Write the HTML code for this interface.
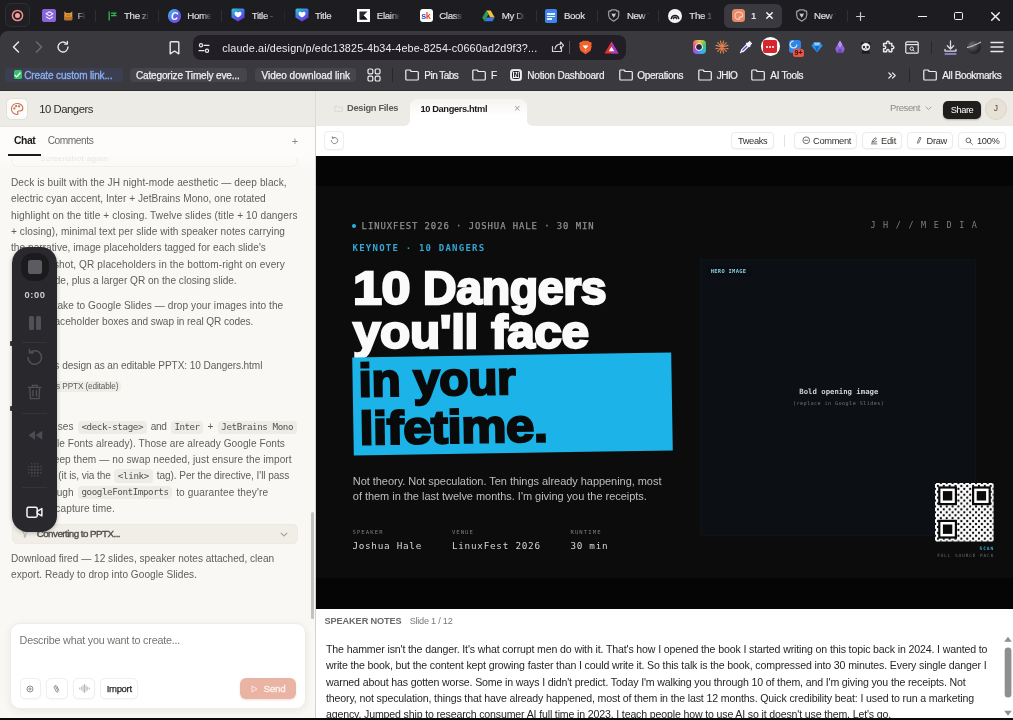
<!DOCTYPE html>
<html lang="en"><head><meta charset="utf-8"><title>10 Dangers</title>
<style>
html,body{margin:0;padding:0;}
body{width:1013px;height:720px;position:relative;overflow:hidden;background:#f7f6f2;font-family:"Liberation Sans",sans-serif;}
div{box-sizing:border-box;}
svg{position:absolute;overflow:visible;}
</style></head><body>
<div style="position:absolute;left:0;top:0;width:1013px;height:720px;overflow:hidden;will-change:transform;">
<div style="position:absolute;left:0.00px;top:0.00px;width:1013.00px;height:42.00px;background:#1d1c21;"></div><div style="position:absolute;left:0.00px;top:31.30px;width:1013.00px;height:59.50px;background:#3a393e;border-radius:8px 0 0 0;"></div><div style="position:absolute;left:0.00px;top:90.20px;width:1013.00px;height:0.70px;background:#2f2e33;"></div><div style="position:absolute;left:4.50px;top:3.20px;width:25.70px;height:23.80px;background:#201f24;border:1px solid #2f2e34;border-radius:6px;"></div><svg width="13" height="13" viewBox="0 0 13 13" style="left:10.800px;top:9.200px"><circle cx="6.500" cy="6.500" r="5.100" fill="none" stroke="#ef8d8d" stroke-width="1.500"/><circle cx="6.500" cy="6.500" r="2.500" fill="#f3a0a0"/></svg><div style="position:absolute;left:42.10px;top:9.00px;width:13.70px;height:12.80px;background:#8a64da;border-radius:2px;"></div><svg width="9" height="9" viewBox="0 0 12 12" style="left:44.500px;top:11px" fill="none" stroke="#f1eaff" stroke-width="1.500" stroke-linejoin="round"><path d="M6 1L1.500 3.800 6 6.500l4.500-2.700zM1.500 7.800L6 10.500l4.500-2.700"/></svg><svg width="8.600" height="9.600" viewBox="0 0 8.600 9.600" style="left:63.600px;top:11px"><path d="M0.300 0.300L2.300 1.900H6.300L8.300 0.300V8.300a1 1 0 0 1-1 1H1.300a1 1 0 0 1-1-1z" fill="#e0993a"/><path d="M0.300 5.800h8v2.500a1 1 0 0 1-1 1H1.300a1 1 0 0 1-1-1z" fill="#b8722a"/><path d="M2.300 4h4" stroke="#a4611d" stroke-width="1"/></svg><div style="position:absolute;left:77.40px;top:6px;width:7.80px;height:20px;overflow:hidden;"><div style='position:absolute;left:0.00px;top:3.44px;line-height:13px;white-space:pre;font-family:"Liberation Sans", sans-serif;font-size:9.7px;font-weight:400;color:#dfdee2;letter-spacing:-0.330px;-webkit-text-stroke:0.2px #dfdee2;'>Figma</div></div><div style="position:absolute;left:76.20px;top:8.00px;width:9.50px;height:15.00px;background:linear-gradient(90deg,rgba(29,28,33,0),#1d1c21);"></div><div style="position:absolute;left:95.30px;top:10.30px;width:1.00px;height:11.50px;background:#302f35;"></div><svg width="10" height="10" viewBox="0 0 10 10" style="left:107.500px;top:10.800px" fill="none" stroke="#2fb84a" stroke-width="1.300"><path d="M1.200 0.500v9"/><path d="M3 2.200h5.500M3 4.700h5.500M8 2.200c-2 0-3 2.500 0 2.500" stroke-width="1.200"/></svg><div style="position:absolute;left:124.00px;top:6px;width:24.50px;height:20px;overflow:hidden;"><div style='position:absolute;left:0.00px;top:3.44px;line-height:13px;white-space:pre;font-family:"Liberation Sans", sans-serif;font-size:9.7px;font-weight:400;color:#dfdee2;letter-spacing:-0.330px;-webkit-text-stroke:0.2px #dfdee2;'>The zip</div></div><div style="position:absolute;left:139.50px;top:8.00px;width:9.50px;height:15.00px;background:linear-gradient(90deg,rgba(29,28,33,0),#1d1c21);"></div><div style="position:absolute;left:158.00px;top:10.30px;width:1.00px;height:11.50px;background:#302f35;"></div><div style="position:absolute;left:167.80px;top:9.30px;width:13.40px;height:13.40px;background:linear-gradient(135deg,#3ec6e8,#5b5be8 60%,#8a4fe0);border-radius:50%;"></div><div style='position:absolute;left:170.98px;top:9.64px;line-height:13px;white-space:pre;font-family:"Liberation Sans", sans-serif;font-size:10px;font-weight:700;color:#ffffff;letter-spacing:0.000px;font-style:italic;'>C</div><div style="position:absolute;left:187.30px;top:6px;width:23.70px;height:20px;overflow:hidden;"><div style='position:absolute;left:0.00px;top:3.44px;line-height:13px;white-space:pre;font-family:"Liberation Sans", sans-serif;font-size:9.7px;font-weight:400;color:#dfdee2;letter-spacing:-0.330px;-webkit-text-stroke:0.2px #dfdee2;'>Home</div></div><div style="position:absolute;left:202.00px;top:8.00px;width:9.50px;height:15.00px;background:linear-gradient(90deg,rgba(29,28,33,0),#1d1c21);"></div><div style="position:absolute;left:221.00px;top:10.30px;width:1.00px;height:11.50px;background:#302f35;"></div><svg width="0" height="0" style="left:0;top:0"><defs><linearGradient id="hg" x1="0" y1="0" x2="0.6" y2="1"><stop offset="0" stop-color="#2ecfc0"/><stop offset="0.45" stop-color="#3a7fe8"/><stop offset="1" stop-color="#6d35e0"/></linearGradient></defs></svg><svg width="14" height="14" viewBox="0 0 14 14" style="left:231.0px;top:8.300px"><path d="M2 0.500h10a1.500 1.500 0 0 1 1.500 1.500v7.500L7 13.600 0.500 9.500V2A1.500 1.500 0 0 1 2 0.500z" fill="url(#hg)"/><path d="M7 9.600C4.600 7.900 3.500 6.800 3.500 5.500c0-1.800 2.400-2.300 3.500-.8 1.100-1.500 3.500-1 3.500.8 0 1.300-1.100 2.400-3.500 4.100z" fill="#fff"/></svg><div style="position:absolute;left:251.70px;top:6px;width:22.30px;height:20px;overflow:hidden;"><div style='position:absolute;left:0.00px;top:3.44px;line-height:13px;white-space:pre;font-family:"Liberation Sans", sans-serif;font-size:9.7px;font-weight:400;color:#dfdee2;letter-spacing:-0.330px;-webkit-text-stroke:0.2px #dfdee2;'>Title -</div></div><div style="position:absolute;left:265.00px;top:8.00px;width:9.50px;height:15.00px;background:linear-gradient(90deg,rgba(29,28,33,0),#1d1c21);"></div><div style="position:absolute;left:284.00px;top:10.30px;width:1.00px;height:11.50px;background:#27262b;"></div><svg width="14" height="14" viewBox="0 0 14 14" style="left:294.5px;top:8.300px"><path d="M2 0.500h10a1.500 1.500 0 0 1 1.500 1.500v7.500L7 13.600 0.500 9.500V2A1.500 1.500 0 0 1 2 0.500z" fill="url(#hg)"/><path d="M7 9.600C4.600 7.900 3.500 6.800 3.500 5.500c0-1.800 2.400-2.300 3.500-.8 1.100-1.500 3.500-1 3.500.8 0 1.300-1.100 2.400-3.500 4.100z" fill="#fff"/></svg><div style="position:absolute;left:315.00px;top:6px;width:19.00px;height:20px;overflow:hidden;"><div style='position:absolute;left:0.00px;top:3.44px;line-height:13px;white-space:pre;font-family:"Liberation Sans", sans-serif;font-size:9.7px;font-weight:400;color:#dfdee2;letter-spacing:-0.330px;-webkit-text-stroke:0.2px #dfdee2;'>Title</div></div><div style="position:absolute;left:356.80px;top:9.10px;width:13.30px;height:12.60px;background:#ffffff;"></div><svg width="9" height="9" viewBox="0 0 9 9" style="left:359px;top:11px"><path d="M0.500 0.500h8L4.500 4.500l4 4h-8z" fill="#2a2a2e"/><path d="M4.500 4.500L8.500 8.500H0.500z" fill="#111114"/></svg><div style="position:absolute;left:376.80px;top:6px;width:22.20px;height:20px;overflow:hidden;"><div style='position:absolute;left:0.00px;top:3.44px;line-height:13px;white-space:pre;font-family:"Liberation Sans", sans-serif;font-size:9.7px;font-weight:400;color:#dfdee2;letter-spacing:-0.330px;-webkit-text-stroke:0.2px #dfdee2;'>Elaine</div></div><div style="position:absolute;left:390.00px;top:8.00px;width:9.50px;height:15.00px;background:linear-gradient(90deg,rgba(29,28,33,0),#1d1c21);"></div><div style="position:absolute;left:419.90px;top:9.10px;width:13.40px;height:13.20px;background:#ffffff;border-radius:3px;"></div><div style='position:absolute;left:421.20px;top:10.08px;line-height:12px;white-space:pre;font-family:"Liberation Sans", sans-serif;font-size:9px;font-weight:700;color:#3d4fc4;letter-spacing:0.000px;'>s</div><div style='position:absolute;left:425.80px;top:10.08px;line-height:12px;white-space:pre;font-family:"Liberation Sans", sans-serif;font-size:9px;font-weight:700;color:#e2472e;letter-spacing:0.000px;'>k</div><div style="position:absolute;left:439.20px;top:6px;width:22.80px;height:20px;overflow:hidden;"><div style='position:absolute;left:0.00px;top:3.44px;line-height:13px;white-space:pre;font-family:"Liberation Sans", sans-serif;font-size:9.7px;font-weight:400;color:#dfdee2;letter-spacing:-0.330px;-webkit-text-stroke:0.2px #dfdee2;'>Classroom</div></div><div style="position:absolute;left:453.00px;top:8.00px;width:9.50px;height:15.00px;background:linear-gradient(90deg,rgba(29,28,33,0),#1d1c21);"></div><svg width="13" height="12" viewBox="0 0 13 12" style="left:482px;top:10px"><path d="M4.300 0.500h4.400l4 7h-4.400z" fill="#f6c338"/><path d="M4.300 0.500L0.300 7.500l2.200 3.800 4-7z" fill="#2a9d55"/><path d="M4.700 7.500h8l-2.200 3.800h-8z" fill="#3d79e6"/></svg><div style="position:absolute;left:501.70px;top:6px;width:22.30px;height:20px;overflow:hidden;"><div style='position:absolute;left:0.00px;top:3.44px;line-height:13px;white-space:pre;font-family:"Liberation Sans", sans-serif;font-size:9.7px;font-weight:400;color:#dfdee2;letter-spacing:-0.330px;-webkit-text-stroke:0.2px #dfdee2;'>My Drive</div></div><div style="position:absolute;left:515.00px;top:8.00px;width:9.50px;height:15.00px;background:linear-gradient(90deg,rgba(29,28,33,0),#1d1c21);"></div><div style="position:absolute;left:535.50px;top:10.30px;width:1.00px;height:11.50px;background:#302f35;"></div><div style="position:absolute;left:544.80px;top:9.30px;width:12.40px;height:13.60px;background:#3f83ee;border-radius:1.800px;"></div><div style="position:absolute;left:547.30px;top:13.30px;width:7.40px;height:1.30px;background:#e8f0fe;"></div><div style="position:absolute;left:547.30px;top:15.80px;width:7.40px;height:1.30px;background:#e8f0fe;"></div><div style="position:absolute;left:547.30px;top:18.30px;width:5.00px;height:1.30px;background:#e8f0fe;"></div><div style="position:absolute;left:563.90px;top:6px;width:23.10px;height:20px;overflow:hidden;"><div style='position:absolute;left:0.00px;top:3.44px;line-height:13px;white-space:pre;font-family:"Liberation Sans", sans-serif;font-size:9.7px;font-weight:400;color:#dfdee2;letter-spacing:-0.330px;-webkit-text-stroke:0.2px #dfdee2;'>Book</div></div><div style="position:absolute;left:596.50px;top:10.30px;width:1.00px;height:11.50px;background:#302f35;"></div><svg width="11.4" height="13.0" viewBox="0 0 14 16" style="left:608.0px;top:9.0px" fill="none" stroke="#9c9ca2" stroke-width="1.500" stroke-linejoin="round"><path d="M4.200 1.200h5.600l1.200 1.300 1.500-.2 1 1.700-.6 1.300.5 1.600-1.300 4.600L7 15l-5.100-3.500L.6 6.900l.5-1.600-.6-1.300 1-1.700 1.500.2z"/><path d="M4.300 5.200l1.500.6h2.400l1.500-.6-.7 2.600L7 10.800 5 7.800z" fill="#c9c9ce" stroke="none"/></svg><div style="position:absolute;left:626.90px;top:6px;width:22.60px;height:20px;overflow:hidden;"><div style='position:absolute;left:0.00px;top:3.44px;line-height:13px;white-space:pre;font-family:"Liberation Sans", sans-serif;font-size:9.7px;font-weight:400;color:#dfdee2;letter-spacing:-0.330px;-webkit-text-stroke:0.2px #dfdee2;'>New Tab</div></div><div style="position:absolute;left:640.50px;top:8.00px;width:9.50px;height:15.00px;background:linear-gradient(90deg,rgba(29,28,33,0),#1d1c21);"></div><div style="position:absolute;left:658.00px;top:10.30px;width:1.00px;height:11.50px;background:#302f35;"></div><div style="position:absolute;left:668.20px;top:9.20px;width:13.80px;height:13.80px;background:#f4f4f6;border-radius:50%;"></div><svg width="10" height="10" viewBox="0 0 10 10" style="left:670.100px;top:11.400px" fill="none" stroke="#1d1c21" stroke-width="1.500" stroke-linecap="round"><path d="M1.300 7.500a3.800 3.800 0 0 1 7.400 0"/><path d="M3.400 7.500a1.700 1.700 0 0 1 3.200 0"/></svg><div style="position:absolute;left:689.30px;top:6px;width:22.70px;height:20px;overflow:hidden;"><div style='position:absolute;left:0.00px;top:3.44px;line-height:13px;white-space:pre;font-family:"Liberation Sans", sans-serif;font-size:9.7px;font-weight:400;color:#dfdee2;letter-spacing:-0.330px;-webkit-text-stroke:0.2px #dfdee2;'>The 10</div></div><div style="position:absolute;left:703.00px;top:8.00px;width:9.50px;height:15.00px;background:linear-gradient(90deg,rgba(29,28,33,0),#1d1c21);"></div><div style="position:absolute;left:723.50px;top:3.70px;width:58.70px;height:24.80px;background:#3a393f;border-radius:6px;"></div><div style="position:absolute;left:731.90px;top:9.00px;width:13.20px;height:13.40px;background:#e98a66;border-radius:3.500px;"></div><svg width="9.500" height="9.500" viewBox="0 0 24 24" style="left:733.8px;top:11.000px" fill="none" stroke="#fbd9cc" stroke-width="2.600" stroke-linecap="round"><path d="M12 2.500C6.500 2.500 2.500 6.800 2.500 12s4.200 9.500 9.500 9.500c1 0 1.800-.8 1.800-1.800 0-.5-.2-.9-.5-1.200-.3-.3-.4-.7-.4-1.200 0-1 .8-1.800 1.800-1.800h2.100c2.900 0 5.200-2.300 5.200-5.200C22 6 17.500 2.500 12 2.500z"/></svg><div style='position:absolute;left:750.90px;top:9.44px;line-height:13px;white-space:pre;font-family:"Liberation Sans", sans-serif;font-size:9.7px;font-weight:400;color:#f0f0f2;letter-spacing:0.000px;-webkit-text-stroke:0.2px #f0f0f2;'>1</div><svg width="7" height="7" viewBox="0 0 7 7" style="left:765.600px;top:12.300px" stroke="#f4f4f6" stroke-width="1.500" stroke-linecap="round"><path d="M0.800 0.800l5.400 5.400M6.200 0.800L0.800 6.200"/></svg><svg width="11.4" height="13.0" viewBox="0 0 14 16" style="left:795.6px;top:9.0px" fill="none" stroke="#9c9ca2" stroke-width="1.500" stroke-linejoin="round"><path d="M4.200 1.200h5.600l1.200 1.300 1.500-.2 1 1.700-.6 1.300.5 1.600-1.300 4.600L7 15l-5.100-3.500L.6 6.900l.5-1.600-.6-1.300 1-1.700 1.500.2z"/><path d="M4.300 5.200l1.500.6h2.400l1.500-.6-.7 2.600L7 10.800 5 7.800z" fill="#c9c9ce" stroke="none"/></svg><div style="position:absolute;left:814.10px;top:6px;width:22.40px;height:20px;overflow:hidden;"><div style='position:absolute;left:0.00px;top:3.44px;line-height:13px;white-space:pre;font-family:"Liberation Sans", sans-serif;font-size:9.7px;font-weight:400;color:#dfdee2;letter-spacing:-0.330px;-webkit-text-stroke:0.2px #dfdee2;'>New Tab</div></div><div style="position:absolute;left:827.50px;top:8.00px;width:9.50px;height:15.00px;background:linear-gradient(90deg,rgba(29,28,33,0),#1d1c21);"></div><div style="position:absolute;left:846.50px;top:10.30px;width:1.00px;height:11.50px;background:#302f35;"></div><svg width="9" height="9" viewBox="0 0 9 9" style="left:856px;top:11.500px" stroke="#c9c8cd" stroke-width="1.200" stroke-linecap="round"><path d="M4.500 0.500v8M0.500 4.500h8"/></svg><div style="position:absolute;left:918.00px;top:15.80px;width:8.50px;height:1.30px;background:#f2f2f4;"></div><div style="position:absolute;left:954.30px;top:11.70px;width:8.40px;height:8.40px;border:1.400px solid #f2f2f4;border-radius:1.500px;"></div><svg width="9" height="9" viewBox="0 0 9 9" style="left:990.500px;top:11.700px" stroke="#f2f2f4" stroke-width="1.400" stroke-linecap="round"><path d="M0.700 0.700l7.600 7.600M8.300 0.700L0.700 8.300"/></svg><svg width="8" height="12" viewBox="0 0 8 12" style="left:12px;top:41px" fill="none" stroke="#e9e9ec" stroke-width="1.500" stroke-linecap="round" stroke-linejoin="round"><path d="M6.500 1L1.500 6l5 5"/></svg><svg width="8" height="12" viewBox="0 0 8 12" style="left:34.500px;top:41px" fill="none" stroke="#6d6c73" stroke-width="1.500" stroke-linecap="round" stroke-linejoin="round"><path d="M1.500 1l5 5-5 5"/></svg><svg width="14" height="14" viewBox="0 0 24 24" style="left:55.500px;top:40px" fill="none" stroke="#e9e9ec" stroke-width="2.300" stroke-linecap="round" stroke-linejoin="round"><path d="M20.500 12a8.500 8.500 0 1 1-2.700-6.200"/><path d="M19.500 2.500v4.500H15" /></svg><svg width="11" height="14" viewBox="0 0 11 14" style="left:168.800px;top:40.600px" fill="none" stroke="#e9e9ec" stroke-width="1.400" stroke-linejoin="round"><path d="M1.200 1.500a.8.8 0 0 1 .8-.8h7a.8.8 0 0 1 .8.8v11.300L5.500 10l-4.300 2.800z"/></svg><div style="position:absolute;left:192.50px;top:35.00px;width:433.50px;height:24.80px;background:#211f25;border-radius:8px;"></div><svg width="12" height="10" viewBox="0 0 12 10" style="left:198.200px;top:42.800px" fill="none" stroke="#e9e9ec" stroke-width="1.200" stroke-linecap="round"><circle cx="3" cy="2.300" r="1.600"/><path d="M6 2.300h5"/><circle cx="9" cy="7.700" r="1.600"/><path d="M1 7.700h5"/></svg><div style='position:absolute;left:222.30px;top:40.76px;line-height:14px;white-space:pre;font-family:"Liberation Sans", sans-serif;font-size:10.8px;font-weight:400;color:#ecebef;letter-spacing:0.130px;'>claude.ai/design/p/edc13825-4b34-4ebe-8254-c0660ad2d9f3?...</div><svg width="13" height="12" viewBox="0 0 13 12" style="left:550.500px;top:40.500px" fill="none" stroke="#d4d3d8" stroke-width="1.200" stroke-linecap="round" stroke-linejoin="round"><path d="M1.500 5.500v5h9v-3"/><path d="M4 8c.5-3 2.500-4.700 5.500-4.800V1l3 3.300-3 3.300V5.300"/></svg><div style="position:absolute;left:569.30px;top:41.00px;width:1.00px;height:12.50px;background:#55545b;"></div><svg width="13" height="15" viewBox="0 0 14 16" style="left:579px;top:39.500px"><path d="M4 0.800h6l1.300 1.400 1.500-.2 1 1.800-.6 1.400.5 1.600-1.300 4.700L7 15.300 1.600 11.500.3 6.800l.5-1.600-.6-1.400 1-1.800 1.500.2z" fill="#f2622e"/><path d="M4.300 5.200l1.500.6h2.400l1.500-.6-.6 2.300L7 9.500 4.900 7.500zM6 10.500l1 .8 1-.8L7 12z" fill="#fff"/></svg><svg width="15" height="13" viewBox="0 0 15 13" style="left:603.500px;top:40.500px"><path d="M7.500 0.500L14.500 12.500H0.500z" fill="#e0322f"/><path d="M7.500 0.500L14.500 12.500H7.500z" fill="#a23bd0"/><path d="M7.500 5.800L10.300 10.300H4.700z" fill="#fff"/></svg><div style="position:absolute;left:692.50px;top:40.20px;width:13.60px;height:13.60px;background:conic-gradient(#f5c542,#35c46a,#2bb6e9,#8b5cf6,#ef4d8a,#f5c542);border-radius:4px;"></div><div style="position:absolute;left:695.10px;top:42.80px;width:8.40px;height:8.40px;background:#2b2a30;border:1.500px solid #fff;border-radius:50%;"></div><svg width="14" height="14" viewBox="0 0 14 14" style="left:715.300px;top:40.200px" stroke="#e0804f" stroke-width="1.500" stroke-linecap="round"><path d="M1.01 5.40L12.99 8.60M2.62 2.62L11.38 11.38M5.40 1.01L8.60 12.99M8.60 1.01L5.40 12.99M11.38 2.62L2.62 11.38M12.99 5.40L1.01 8.60" stroke-width="1.150"/></svg><svg width="14" height="14" viewBox="0 0 14 14" style="left:739px;top:40px"><path d="M10.500 0.800l2.700 2.700-2 2 .6.600-1.200 1.200-.6-.6-5.300 5.300-2.400.6-.8.800-.8-.8.800-.8.600-2.400 5.300-5.300-.6-.6L8 2.300l.6.600z" fill="#f4f4fa"/><path d="M7.600 5.400l1 1-4.200 4.200-1.300.3.300-1.300z" fill="#5b4fd6"/></svg><div style="position:absolute;left:760.50px;top:37.20px;width:19.00px;height:19.00px;background:#ffffff;border-radius:50%;"></div><div style="position:absolute;left:763.40px;top:40.20px;width:13.60px;height:12.60px;background:#d8242c;border-radius:2px;"></div><div style="position:absolute;left:765.60px;top:45.80px;width:2.00px;height:2.00px;background:#fff;border-radius:50%;"></div><div style="position:absolute;left:769.00px;top:45.80px;width:2.00px;height:2.00px;background:#fff;border-radius:50%;"></div><div style="position:absolute;left:772.40px;top:45.80px;width:2.00px;height:2.00px;background:#fff;border-radius:50%;"></div><div style="position:absolute;left:788.50px;top:40.00px;width:12.00px;height:12.50px;background:#2f86e8;border-radius:3px 3px 6px 3px;"></div><svg width="9" height="9" viewBox="0 0 9 9" style="left:789px;top:40.300px" fill="none" stroke="#cfe6ff" stroke-width="1.200"><path d="M7.800 4.500a3.300 3.300 0 1 1-3.300-3.300"/></svg><div style="position:absolute;left:792.80px;top:48.90px;width:11.60px;height:8.00px;background:#ee5340;border-radius:2.500px;"></div><div style='position:absolute;left:794.61px;top:48.47px;line-height:9px;white-space:pre;font-family:"Liberation Sans", sans-serif;font-size:7px;font-weight:700;color:#2a1210;letter-spacing:0.000px;'>9+</div><svg width="12" height="11" viewBox="0 0 12 11" style="left:811px;top:41.500px"><path d="M2.800 0.500h6.400L11.700 3.700 6 10.500 0.300 3.700z" fill="#2f8fe6"/><path d="M2.800 0.500h6.400L8 3.700H4z" fill="#8fd0ff"/><path d="M4 3.700h4L6 10.500z" fill="#1767c4"/></svg><svg width="12" height="14" viewBox="0 0 12 14" style="left:834px;top:40px"><path d="M6 0.500l2.200 3.700 2.600 4.300-1.600 4.300H2.800L1.200 8.500l2.600-4.300z" fill="#8e63d6"/><path d="M6 0.500l2.200 3.700L6 8 3.800 4.200z" fill="#b595ee"/><path d="M6 8l3.200 4.800H2.800z" fill="#6f47bd"/></svg><svg width="11.6" height="12.4" viewBox="0 0 14 15" style="left:859.800px;top:41.400px"><circle cx="3" cy="3.200" r="2.100" fill="#1b1a1f"/><circle cx="11" cy="3.200" r="2.100" fill="#1b1a1f"/><path d="M2 15c0-3 2-4.500 5-4.500s5 1.500 5 4.500z" fill="#1b1a1f"/><ellipse cx="7" cy="7.300" rx="5.200" ry="4.800" fill="#efeff2"/><ellipse cx="4.800" cy="7.300" rx="1.400" ry="1.700" fill="#2a292e"/><ellipse cx="9.200" cy="7.300" rx="1.400" ry="1.700" fill="#2a292e"/><circle cx="7" cy="9.600" r=".7" fill="#2a292e"/></svg><svg width="14" height="14" viewBox="0 0 24 24" style="left:881.300px;top:39.800px" fill="none" stroke="#e9e9ec" stroke-width="2.600" stroke-linejoin="round"><path d="M9.500 4.500a2.300 2.300 0 1 1 4.600 0V6h4.400v4.400h1.200a2.300 2.300 0 1 1 0 4.600h-1.200v5H14v-1.300a2.200 2.200 0 1 0-4.400 0V20H4.500v-5h1.300a2.300 2.300 0 1 0 0-4.600H4.500V6h5z"/></svg><svg width="14" height="13" viewBox="0 0 14 13" style="left:905.300px;top:40.500px" fill="none" stroke="#e9e9ec" stroke-width="1.200" stroke-linejoin="round"><rect x="0.800" y="0.800" width="12.400" height="11.400" rx="1.300"/><path d="M0.800 3.600h12.400"/><circle cx="6.700" cy="7.600" r="1.700" stroke-width="1"/><path d="M8 8.900l1.400 1.400" stroke-width="1"/></svg><div style="position:absolute;left:930.80px;top:40.50px;width:1.20px;height:13.50px;background:#28272c;"></div><svg width="13" height="15" viewBox="0 0 13 15" style="left:943.500px;top:39.500px" fill="none" stroke-linecap="round" stroke-linejoin="round"><path d="M6.500 1v7.500M3.300 5.800l3.200 3.200 3.200-3.200M1 9.300v1.800h11V9.300" stroke="#dcdbe6" stroke-width="1.300"/><path d="M1.200 14h10.600" stroke="#9d95e8" stroke-width="1.400"/></svg><div style="position:absolute;left:967.20px;top:40.50px;width:13.60px;height:13.60px;background:radial-gradient(circle at 35% 30%,#6a6a6e,#2a2a2d 60%,#151517);border-radius:50%;"></div><svg width="16" height="8" viewBox="0 0 16 8" style="left:966px;top:40.500px" stroke="#d7d7da" stroke-width="1" fill="none"><path d="M1 6.500C5 6 10 3.500 15 1"/></svg><svg width="14" height="12" viewBox="0 0 14 12" style="left:990px;top:41px" stroke="#e9e9ec" stroke-width="1.400" stroke-linecap="round"><path d="M1 1.500h12M1 6h12M1 10.500h12"/></svg><div style="position:absolute;left:5.00px;top:67.90px;width:117.50px;height:14.60px;background:#3c3f52;border-radius:4px;"></div><div style="position:absolute;left:13.50px;top:70.20px;width:8.60px;height:8.60px;background:#35c069;border-radius:1.500px;"></div><svg width="7" height="6" viewBox="0 0 7 6" style="left:14.300px;top:71.500px" fill="none" stroke="#fff" stroke-width="1.300" stroke-linecap="round" stroke-linejoin="round"><path d="M0.900 3.100l1.800 1.800L6.100 1"/></svg><div style='position:absolute;left:24.30px;top:68.83px;line-height:13px;white-space:pre;font-family:"Liberation Sans", sans-serif;font-size:10px;font-weight:400;color:#8fb2f3;letter-spacing:-0.150px;-webkit-text-stroke:0.3px #8fb2f3;'>Create custom link...</div><div style="position:absolute;left:129.50px;top:67.90px;width:117.00px;height:14.60px;background:#46454c;border-radius:4px;"></div><div style='position:absolute;left:136.00px;top:68.83px;line-height:13px;white-space:pre;font-family:"Liberation Sans", sans-serif;font-size:10px;font-weight:400;color:#f0f0f3;letter-spacing:-0.157px;-webkit-text-stroke:0.25px #f0f0f3;'>Categorize Timely eve...</div><div style="position:absolute;left:255.00px;top:67.90px;width:101.00px;height:14.60px;background:#46454c;border-radius:4px;"></div><div style='position:absolute;left:261.50px;top:68.83px;line-height:13px;white-space:pre;font-family:"Liberation Sans", sans-serif;font-size:10px;font-weight:400;color:#f0f0f3;letter-spacing:-0.015px;-webkit-text-stroke:0.25px #f0f0f3;'>Video download link</div><svg width="14" height="14" viewBox="0 0 14 14" style="left:367.300px;top:68px" fill="none" stroke="#f0f0f3" stroke-width="1.200"><rect x="1" y="1" width="4.800" height="4.800" rx="1.300"/><rect x="8.200" y="1" width="4.800" height="4.800" rx="1.300"/><rect x="1" y="8.200" width="4.800" height="4.800" rx="1.300"/><rect x="8.200" y="8.200" width="4.800" height="4.800" rx="1.300"/></svg><div style="position:absolute;left:391.80px;top:68.00px;width:1.20px;height:14.00px;background:#28272c;"></div><svg width="14" height="12" viewBox="0 0 14 12" style="left:404.5px;top:69px" fill="none" stroke="#f0f0f3" stroke-width="1.200" stroke-linejoin="round"><path d="M0.800 2a1 1 0 0 1 1-1h3.200l1.300 1.500h6a1 1 0 0 1 1 1V10a1 1 0 0 1-1 1H1.800a1 1 0 0 1-1-1z"/></svg><div style='position:absolute;left:424.30px;top:68.83px;line-height:13px;white-space:pre;font-family:"Liberation Sans", sans-serif;font-size:10px;font-weight:400;color:#f0f0f3;letter-spacing:-0.523px;-webkit-text-stroke:0.2px #f0f0f3;'>Pin Tabs</div><svg width="14" height="12" viewBox="0 0 14 12" style="left:471.5px;top:69px" fill="none" stroke="#f0f0f3" stroke-width="1.200" stroke-linejoin="round"><path d="M0.800 2a1 1 0 0 1 1-1h3.200l1.300 1.500h6a1 1 0 0 1 1 1V10a1 1 0 0 1-1 1H1.800a1 1 0 0 1-1-1z"/></svg><div style='position:absolute;left:491.00px;top:68.83px;line-height:13px;white-space:pre;font-family:"Liberation Sans", sans-serif;font-size:10px;font-weight:400;color:#f0f0f3;letter-spacing:-1.109px;-webkit-text-stroke:0.2px #f0f0f3;'>F</div><div style="position:absolute;left:504.00px;top:66.00px;width:6.00px;height:18.00px;background:linear-gradient(90deg,rgba(58,57,62,0),#3a393e);"></div><div style="position:absolute;left:509.80px;top:68.60px;width:12.60px;height:12.80px;background:#f1f1f4;border:1.300px solid #d9d9de;border-radius:2.800px;"></div><div style="position:absolute;left:512.00px;top:70.80px;width:8.20px;height:8.40px;background:#f7f7f9;border:1px solid #26252a;border-radius:1.500px;"></div><div style='position:absolute;left:513.42px;top:71.39px;line-height:8px;white-space:pre;font-family:"DejaVu Sans", sans-serif;font-size:6.4px;font-weight:700;color:#1d1c21;letter-spacing:0.000px;'>N</div><div style='position:absolute;left:527.30px;top:68.83px;line-height:13px;white-space:pre;font-family:"Liberation Sans", sans-serif;font-size:10px;font-weight:400;color:#f0f0f3;letter-spacing:-0.226px;-webkit-text-stroke:0.2px #f0f0f3;'>Notion Dashboard</div><svg width="14" height="12" viewBox="0 0 14 12" style="left:618.5px;top:69px" fill="none" stroke="#f0f0f3" stroke-width="1.200" stroke-linejoin="round"><path d="M0.800 2a1 1 0 0 1 1-1h3.200l1.300 1.500h6a1 1 0 0 1 1 1V10a1 1 0 0 1-1 1H1.800a1 1 0 0 1-1-1z"/></svg><div style='position:absolute;left:637.30px;top:68.83px;line-height:13px;white-space:pre;font-family:"Liberation Sans", sans-serif;font-size:10px;font-weight:400;color:#f0f0f3;letter-spacing:-0.292px;-webkit-text-stroke:0.2px #f0f0f3;'>Operations</div><svg width="14" height="12" viewBox="0 0 14 12" style="left:697.5px;top:69px" fill="none" stroke="#f0f0f3" stroke-width="1.200" stroke-linejoin="round"><path d="M0.800 2a1 1 0 0 1 1-1h3.200l1.300 1.500h6a1 1 0 0 1 1 1V10a1 1 0 0 1-1 1H1.800a1 1 0 0 1-1-1z"/></svg><div style='position:absolute;left:716.80px;top:68.83px;line-height:13px;white-space:pre;font-family:"Liberation Sans", sans-serif;font-size:10px;font-weight:400;color:#f0f0f3;letter-spacing:-0.570px;-webkit-text-stroke:0.2px #f0f0f3;'>JHIO</div><svg width="14" height="12" viewBox="0 0 14 12" style="left:750.5px;top:69px" fill="none" stroke="#f0f0f3" stroke-width="1.200" stroke-linejoin="round"><path d="M0.800 2a1 1 0 0 1 1-1h3.200l1.300 1.500h6a1 1 0 0 1 1 1V10a1 1 0 0 1-1 1H1.800a1 1 0 0 1-1-1z"/></svg><div style='position:absolute;left:770.30px;top:68.83px;line-height:13px;white-space:pre;font-family:"Liberation Sans", sans-serif;font-size:10px;font-weight:400;color:#f0f0f3;letter-spacing:-0.299px;-webkit-text-stroke:0.2px #f0f0f3;'>AI Tools</div><svg width="8" height="7" viewBox="0 0 8 7" style="left:887.500px;top:71.500px" fill="none" stroke="#f0f0f3" stroke-width="1.200" stroke-linecap="round" stroke-linejoin="round"><path d="M0.800 0.800l2.700 2.700L0.800 6.200M4.500 0.800l2.700 2.700L4.500 6.200"/></svg><div style="position:absolute;left:908.80px;top:68.00px;width:1.20px;height:14.00px;background:#28272c;"></div><svg width="14" height="12" viewBox="0 0 14 12" style="left:922.5px;top:69px" fill="none" stroke="#f0f0f3" stroke-width="1.200" stroke-linejoin="round"><path d="M0.800 2a1 1 0 0 1 1-1h3.200l1.300 1.500h6a1 1 0 0 1 1 1V10a1 1 0 0 1-1 1H1.800a1 1 0 0 1-1-1z"/></svg><div style='position:absolute;left:942.30px;top:68.83px;line-height:13px;white-space:pre;font-family:"Liberation Sans", sans-serif;font-size:10px;font-weight:400;color:#f0f0f3;letter-spacing:-0.377px;-webkit-text-stroke:0.2px #f0f0f3;'>All Bookmarks</div><div style="position:absolute;left:0.00px;top:126.20px;width:315.00px;height:591.80px;background:#f9f8f5;"></div><div style="position:absolute;left:0.00px;top:126.20px;width:315.00px;height:29.70px;background:#fdfcfb;"></div><div style='position:absolute;left:14.00px;top:133.80px;line-height:14px;white-space:pre;font-family:"Liberation Sans", sans-serif;font-size:10.4px;font-weight:700;color:#1b1a18;letter-spacing:-0.448px;'>Chat</div><div style='position:absolute;left:47.70px;top:134.27px;line-height:13px;white-space:pre;font-family:"Liberation Sans", sans-serif;font-size:10.2px;font-weight:400;color:#6b6964;letter-spacing:-0.458px;'>Comments</div><div style="position:absolute;left:8.00px;top:154.30px;width:32.70px;height:1.60px;background:#1b1a18;"></div><div style="position:absolute;left:0.00px;top:155.90px;width:315.00px;height:16.00px;background:linear-gradient(#fdfcfb,#f9f8f5);"></div><div style='position:absolute;left:291.78px;top:133.79px;line-height:14px;white-space:pre;font-family:"Liberation Sans", sans-serif;font-size:11px;font-weight:400;color:#8b8984;letter-spacing:0.000px;'>+</div><div style="position:absolute;left:11.00px;top:157.00px;width:287.00px;height:9.50px;background:#fbfaf8;border:1px solid #f1f0ec;border-top:none;border-radius:0 0 6px 6px;"></div><div style='position:absolute;left:40.00px;top:153.63px;line-height:10px;white-space:pre;font-family:"Liberation Sans", sans-serif;font-size:8px;font-weight:400;color:#e9e7e2;letter-spacing:0.358px;'>Screenshot again</div><div style='position:absolute;left:11.00px;top:175.80px;line-height:13px;white-space:pre;font-family:"Liberation Sans", sans-serif;font-size:10.1px;font-weight:400;color:#5f5e5a;letter-spacing:0.079px;'>Deck is built with the JH night-mode aesthetic — deep black,</div><div style='position:absolute;left:11.00px;top:192.15px;line-height:13px;white-space:pre;font-family:"Liberation Sans", sans-serif;font-size:10.1px;font-weight:400;color:#5f5e5a;letter-spacing:0.034px;'>electric cyan accent, Inter + JetBrains Mono, one rotated</div><div style='position:absolute;left:11.00px;top:208.50px;line-height:13px;white-space:pre;font-family:"Liberation Sans", sans-serif;font-size:10.1px;font-weight:400;color:#5f5e5a;letter-spacing:0.111px;'>highlight on the title + closing. Twelve slides (title + 10 dangers</div><div style='position:absolute;left:11.00px;top:224.85px;line-height:13px;white-space:pre;font-family:"Liberation Sans", sans-serif;font-size:10.1px;font-weight:400;color:#5f5e5a;letter-spacing:0.072px;'>+ closing), minimal text per slide with speaker notes carrying</div><div style='position:absolute;left:11.00px;top:241.20px;line-height:13px;white-space:pre;font-family:"Liberation Sans", sans-serif;font-size:10.1px;font-weight:400;color:#5f5e5a;letter-spacing:0.039px;'>the narrative, image placeholders tagged for each slide's</div><div style='position:absolute;left:30.70px;top:257.55px;line-height:13px;white-space:pre;font-family:"Liberation Sans", sans-serif;font-size:10.1px;font-weight:400;color:#5f5e5a;letter-spacing:0.060px;'>hero shot, </div><div style='position:absolute;left:79.00px;top:257.55px;line-height:13px;white-space:pre;font-family:"Liberation Sans", sans-serif;font-size:10.1px;font-weight:400;color:#5f5e5a;letter-spacing:0.117px;'>QR placeholders in the bottom-right on every</div><div style='position:absolute;left:8.56px;top:273.90px;line-height:13px;white-space:pre;font-family:"Liberation Sans", sans-serif;font-size:10.1px;font-weight:400;color:#5f5e5a;letter-spacing:0.060px;clip-path:inset(0 0 0 3.94px);'>content slide, </div><div style='position:absolute;left:71.70px;top:273.90px;line-height:13px;white-space:pre;font-family:"Liberation Sans", sans-serif;font-size:10.1px;font-weight:400;color:#5f5e5a;letter-spacing:0.001px;'>plus a larger QR on the closing slide.</div><div style='position:absolute;left:10.83px;top:298.70px;line-height:13px;white-space:pre;font-family:"Liberation Sans", sans-serif;font-size:10.1px;font-weight:400;color:#5f5e5a;letter-spacing:0.060px;clip-path:inset(0 0 0 1.67px);'>Ready to take </div><div style='position:absolute;left:76.70px;top:298.70px;line-height:13px;white-space:pre;font-family:"Liberation Sans", sans-serif;font-size:10.1px;font-weight:400;color:#5f5e5a;letter-spacing:0.067px;'>to Google Slides — drop your images into the</div><div style='position:absolute;left:15.78px;top:315.00px;line-height:13px;white-space:pre;font-family:"Liberation Sans", sans-serif;font-size:10.1px;font-weight:400;color:#5f5e5a;letter-spacing:0.060px;'>image placeholder </div><div style='position:absolute;left:102.10px;top:315.00px;line-height:13px;white-space:pre;font-family:"Liberation Sans", sans-serif;font-size:10.1px;font-weight:400;color:#5f5e5a;letter-spacing:-0.079px;'>boxes and swap in real QR codes.</div><div style='position:absolute;left:11.14px;top:358.60px;line-height:13px;white-space:pre;font-family:"Liberation Sans", sans-serif;font-size:10.1px;font-weight:400;color:#5f5e5a;letter-spacing:0.060px;clip-path:inset(0 0 0 1.36px);'>Export this </div><div style='position:absolute;left:62.30px;top:358.60px;line-height:13px;white-space:pre;font-family:"Liberation Sans", sans-serif;font-size:10.1px;font-weight:400;color:#5f5e5a;letter-spacing:-0.099px;'>design as an editable PPTX: 10 Dangers.html</div><div style='position:absolute;left:28.56px;top:436.60px;line-height:13px;white-space:pre;font-family:"Liberation Sans", sans-serif;font-size:10.1px;font-weight:400;color:#5f5e5a;letter-spacing:0.060px;'>(Google </div><div style='position:absolute;left:67.70px;top:436.60px;line-height:13px;white-space:pre;font-family:"Liberation Sans", sans-serif;font-size:10.1px;font-weight:400;color:#5f5e5a;letter-spacing:0.056px;'>Fonts already). Those are already Google Fonts</div><div style='position:absolute;left:22.69px;top:453.00px;line-height:13px;white-space:pre;font-family:"Liberation Sans", sans-serif;font-size:10.1px;font-weight:400;color:#5f5e5a;letter-spacing:0.060px;'>so I'll keep </div><div style='position:absolute;left:73.60px;top:453.00px;line-height:13px;white-space:pre;font-family:"Liberation Sans", sans-serif;font-size:10.1px;font-weight:400;color:#5f5e5a;letter-spacing:0.071px;'>them — no swap needed, just ensure the import</div><div style='position:absolute;left:11.00px;top:552.00px;line-height:13px;white-space:pre;font-family:"Liberation Sans", sans-serif;font-size:10.1px;font-weight:400;color:#5f5e5a;letter-spacing:0.001px;'>Download fired — 12 slides, speaker notes attached, clean</div><div style='position:absolute;left:11.00px;top:568.40px;line-height:13px;white-space:pre;font-family:"Liberation Sans", sans-serif;font-size:10.1px;font-weight:400;color:#5f5e5a;letter-spacing:0.034px;'>export. Ready to drop into Google Slides.</div><div style="position:absolute;left:9.50px;top:341.00px;width:3.00px;height:5.00px;background:#3a3936;border-radius:1px;"></div><div style="position:absolute;left:9.50px;top:406.00px;width:3.00px;height:5.00px;background:#3a3936;border-radius:1px;"></div><div style="position:absolute;left:14.00px;top:380.60px;width:106.80px;height:11.70px;background:#eeede8;border-radius:4px;"></div><div style='position:absolute;left:12.69px;top:380.52px;line-height:11px;white-space:pre;font-family:"Liberation Sans", sans-serif;font-size:8.2px;font-weight:400;color:#5f5d58;letter-spacing:0.000px;clip-path:inset(0 0 0 1.31px);'>Download as </div><div style='position:absolute;left:62.30px;top:380.52px;line-height:11px;white-space:pre;font-family:"Liberation Sans", sans-serif;font-size:8.2px;font-weight:400;color:#5f5d58;letter-spacing:-0.113px;'>PPTX (editable)</div><div style='position:absolute;left:7.22px;top:420.40px;line-height:13px;white-space:pre;font-family:"Liberation Sans", sans-serif;font-size:10.1px;font-weight:400;color:#5f5e5a;letter-spacing:0.060px;clip-path:inset(0 0 0 5.28px);'>The deck uses</div><div style="position:absolute;left:77.80px;top:420.50px;width:68.90px;height:13.60px;background:#eeece6;border-radius:3.500px;"></div><div style='position:absolute;left:81.40px;top:420.81px;line-height:12px;white-space:pre;font-family:"DejaVu Sans Mono", monospace;font-size:9.2px;font-weight:400;color:#55534e;letter-spacing:-0.391px;'>&lt;deck-stage&gt;</div><div style='position:absolute;left:150.70px;top:420.40px;line-height:13px;white-space:pre;font-family:"Liberation Sans", sans-serif;font-size:10.1px;font-weight:400;color:#5f5e5a;letter-spacing:-0.281px;'>and</div><div style="position:absolute;left:170.80px;top:420.50px;width:32.50px;height:13.60px;background:#eeece6;border-radius:3.500px;"></div><div style='position:absolute;left:174.40px;top:420.81px;line-height:12px;white-space:pre;font-family:"DejaVu Sans Mono", monospace;font-size:9.2px;font-weight:400;color:#55534e;letter-spacing:-0.474px;'>Inter</div><div style='position:absolute;left:207.50px;top:420.40px;line-height:13px;white-space:pre;font-family:"Liberation Sans", sans-serif;font-size:10.1px;font-weight:400;color:#5f5e5a;letter-spacing:0.000px;'>+</div><div style="position:absolute;left:217.70px;top:420.50px;width:79.00px;height:13.60px;background:#eeece6;border-radius:3.500px;"></div><div style='position:absolute;left:221.30px;top:420.81px;line-height:12px;white-space:pre;font-family:"DejaVu Sans Mono", monospace;font-size:9.2px;font-weight:400;color:#55534e;letter-spacing:-0.404px;'>JetBrains Mono</div><div style='position:absolute;left:11.12px;top:469.10px;line-height:13px;white-space:pre;font-family:"Liberation Sans", sans-serif;font-size:10.1px;font-weight:400;color:#5f5e5a;letter-spacing:0.060px;clip-path:inset(0 0 0 1.38px);'>is present </div><div style='position:absolute;left:58.30px;top:469.10px;line-height:13px;white-space:pre;font-family:"Liberation Sans", sans-serif;font-size:10.1px;font-weight:400;color:#5f5e5a;letter-spacing:-0.084px;'>(it is, via the</div><div style="position:absolute;left:114.20px;top:469.20px;width:38.40px;height:13.60px;background:#eeece6;border-radius:3.500px;"></div><div style='position:absolute;left:117.80px;top:469.51px;line-height:12px;white-space:pre;font-family:"DejaVu Sans Mono", monospace;font-size:9.2px;font-weight:400;color:#55534e;letter-spacing:-0.334px;'>&lt;link&gt;</div><div style='position:absolute;left:156.70px;top:469.10px;line-height:13px;white-space:pre;font-family:"Liberation Sans", sans-serif;font-size:10.1px;font-weight:400;color:#5f5e5a;letter-spacing:-0.067px;'>tag). Per the directive, I'll pass</div><div style='position:absolute;left:13.46px;top:485.80px;line-height:13px;white-space:pre;font-family:"Liberation Sans", sans-serif;font-size:10.1px;font-weight:400;color:#5f5e5a;letter-spacing:0.060px;'>them through</div><div style="position:absolute;left:77.80px;top:485.90px;width:94.40px;height:13.60px;background:#eeece6;border-radius:3.500px;"></div><div style='position:absolute;left:81.40px;top:486.21px;line-height:12px;white-space:pre;font-family:"DejaVu Sans Mono", monospace;font-size:9.2px;font-weight:400;color:#55534e;letter-spacing:-0.403px;'>googleFontImports</div><div style='position:absolute;left:176.20px;top:485.80px;line-height:13px;white-space:pre;font-family:"Liberation Sans", sans-serif;font-size:10.1px;font-weight:400;color:#5f5e5a;letter-spacing:0.132px;'>to guarantee they're</div><div style='position:absolute;left:10.01px;top:502.40px;line-height:13px;white-space:pre;font-family:"Liberation Sans", sans-serif;font-size:10.1px;font-weight:400;color:#5f5e5a;letter-spacing:0.100px;clip-path:inset(0 0 0 2.49px);'>loaded at capture time.</div><div style="position:absolute;left:11.70px;top:524.30px;width:286.00px;height:19.40px;background:#f0eee7;border:1px solid #eceae3;border-radius:5px;"></div><svg width="8" height="9" viewBox="0 0 24 24" style="left:21px;top:529.500px" fill="none" stroke="#9a9892" stroke-width="2"><path d="M5 3h14l-5 8v8l-4 2v-10z"/></svg><div style='position:absolute;left:36.70px;top:527.40px;line-height:13px;white-space:pre;font-family:"Liberation Sans", sans-serif;font-size:9.8px;font-weight:400;color:#4f4d48;letter-spacing:-0.545px;-webkit-text-stroke:0.35px #4f4d48;'>Converting to PPTX...</div><svg width="8" height="5" viewBox="0 0 8 5" style="left:280.300px;top:531.900px" fill="none" stroke="#a5a39d" stroke-width="1.100"><path d="M0.800 0.800l3.200 3.200 3.200-3.200"/></svg><div style="position:absolute;left:310.50px;top:511.70px;width:3.30px;height:107.30px;background:#c3c2bf;border-radius:1.600px;"></div><div style="position:absolute;left:10.10px;top:623.40px;width:296.00px;height:85.90px;background:#ffffff;border:1px solid #efede8;border-radius:10px;box-shadow:0 2px 8px rgba(0,0,0,.07);"></div><div style='position:absolute;left:19.60px;top:633.07px;line-height:14px;white-space:pre;font-family:"Liberation Sans", sans-serif;font-size:10.8px;font-weight:400;color:#77756f;letter-spacing:-0.235px;'>Describe what you want to create...</div><div style="position:absolute;left:19.60px;top:678.30px;width:21.40px;height:20.60px;background:#fff;border:1px solid #f0efeb;border-radius:5px;box-shadow:0 1px 2px rgba(0,0,0,.035);"></div><div style="position:absolute;left:46.40px;top:678.30px;width:21.50px;height:20.60px;background:#fff;border:1px solid #f0efeb;border-radius:5px;box-shadow:0 1px 2px rgba(0,0,0,.035);"></div><div style="position:absolute;left:73.30px;top:678.30px;width:21.50px;height:20.60px;background:#fff;border:1px solid #f0efeb;border-radius:5px;box-shadow:0 1px 2px rgba(0,0,0,.035);"></div><div style="position:absolute;left:100.40px;top:678.30px;width:37.90px;height:20.60px;background:#fff;border:1px solid #f0efeb;border-radius:5px;box-shadow:0 1px 2px rgba(0,0,0,.035);"></div><svg width="8" height="8" viewBox="0 0 24 24" style="left:26.300px;top:684.600px" fill="none" stroke="#6a6863" stroke-width="2.200"><circle cx="12" cy="12" r="9"/><circle cx="12" cy="12" r="3.200"/></svg><svg width="8" height="10" viewBox="0 0 24 30" style="left:53.200px;top:683.600px" fill="none" stroke="#6a6863" stroke-width="2.200" stroke-linecap="round"><path d="M8 8l7 13c1.500 3-3 5.500-4.700 2.500L4 11C1.500 6 9 2 11.500 7l6 11"/></svg><svg width="11" height="9" viewBox="0 0 33 27" style="left:78.600px;top:684.100px" fill="none" stroke="#8f8d88" stroke-width="1.900" stroke-linecap="round"><path d="M2 12v3M7 9.500v8M12 5v17M16.500 1.500v24M21 5v17M26 9.500v8M31 12v3"/></svg><div style='position:absolute;left:106.74px;top:682.68px;line-height:12px;white-space:pre;font-family:"Liberation Sans", sans-serif;font-size:9.5px;font-weight:400;color:#2a2927;letter-spacing:-0.323px;-webkit-text-stroke:0.250px #2a2927;'>Import</div><div style="position:absolute;left:240.00px;top:678.30px;width:56.00px;height:20.60px;background:#e9b4a4;border-radius:6px;box-shadow:0 1px 2px rgba(200,120,100,.25);"></div><svg width="7" height="8" viewBox="0 0 14 16" style="left:251.300px;top:684.600px" fill="none" stroke="#fbeae4" stroke-width="1.800" stroke-linejoin="round"><path d="M2 2l10 6-10 6z"/></svg><div style='position:absolute;left:263.50px;top:682.15px;line-height:13px;white-space:pre;font-family:"Liberation Sans", sans-serif;font-size:9.8px;font-weight:400;color:#fcf1ec;letter-spacing:-0.223px;-webkit-text-stroke:0.3px #fcf1ec;'>Send</div><div style="position:absolute;left:0.00px;top:90.80px;width:1013.00px;height:35.40px;background:#edebe6;"></div><div style="position:absolute;left:0.00px;top:125.90px;width:315.00px;height:0.60px;background:#e6e4de;"></div><div style="position:absolute;left:6.00px;top:97.50px;width:22.00px;height:22.00px;background:#fdfcfa;border:1px solid #e2dfd8;border-radius:5.5px;"></div><svg width="14" height="14" viewBox="0 0 24 24" style="left:10px;top:101.5px" fill="none" stroke="#c96f50" stroke-width="1.9" stroke-linecap="round" stroke-linejoin="round"><path d="M12 2.5C6.5 2.5 2.5 6.8 2.5 12s4.2 9.5 9.5 9.5c1 0 1.8-.8 1.8-1.8 0-.5-.2-.9-.5-1.2-.3-.3-.4-.7-.4-1.2 0-1 .8-1.8 1.8-1.8h2.1c2.9 0 5.2-2.300 5.200-5.200C22 6 17.500 2.500 12 2.500z"/><circle cx="7.5" cy="11" r="1" fill="#c96f50"/><circle cx="10.500" cy="7" r="1" fill="#c96f50"/><circle cx="15.500" cy="7.500" r="1" fill="#c96f50"/></svg><div style='position:absolute;left:39.30px;top:101.88px;line-height:15px;white-space:pre;font-family:"Liberation Sans", sans-serif;font-size:11.3px;font-weight:400;color:#2d2c2a;letter-spacing:-0.481px;'>10 Dangers</div><div style="position:absolute;left:315.00px;top:91.00px;width:1.00px;height:36.00px;background:#dddbd5;"></div><svg width="9" height="9" viewBox="0 0 12 12" style="left:334px;top:104px" fill="none" stroke="#d9d6cf" stroke-width="1.1"><path d="M1 3h3.500l1 1.200H11V10H1z"/></svg><div style='position:absolute;left:347.10px;top:102.48px;line-height:12px;white-space:pre;font-family:"Liberation Sans", sans-serif;font-size:9.3px;font-weight:700;color:#5d5b57;letter-spacing:-0.314px;'>Design Files</div><div style="position:absolute;left:410.00px;top:99.40px;width:117.00px;height:26.90px;background:linear-gradient(#f5f4f0,#ffffff 65%);border-radius:7px 7px 0 0;"></div><svg width="8" height="6" viewBox="0 0 8 6" style="left:402.2px;top:120.3px"><path d="M8 0v6H0c5 0 8-2 8-6z" fill="#ffffff"/></svg><svg width="8" height="6" viewBox="0 0 8 6" style="left:526.8px;top:120.3px"><path d="M0 0v6h8c-5 0-8-2-8-6z" fill="#ffffff"/></svg><div style='position:absolute;left:420.40px;top:102.58px;line-height:12px;white-space:pre;font-family:"Liberation Sans", sans-serif;font-size:9.3px;font-weight:700;color:#1b1a18;letter-spacing:-0.370px;'>10 Dangers.html</div><div style='position:absolute;left:513.98px;top:101.19px;line-height:14px;white-space:pre;font-family:"Liberation Sans", sans-serif;font-size:11px;font-weight:400;color:#a19f9a;letter-spacing:0.000px;'>×</div><div style='position:absolute;left:890.00px;top:102.21px;line-height:12px;white-space:pre;font-family:"Liberation Sans", sans-serif;font-size:9.5px;font-weight:400;color:#8c8a85;letter-spacing:-0.393px;'>Present</div><svg width="7" height="5" viewBox="0 0 7 5" style="left:924.5px;top:106.4px" fill="none" stroke="#a3a19b" stroke-width="1"><path d="M0.700 0.800l2.800 2.800 2.800-2.800"/></svg><div style="position:absolute;left:943.30px;top:100.80px;width:37.30px;height:17.80px;background:#1f1e1c;border-radius:5px;box-shadow:0 1px 2px rgba(0,0,0,.25);"></div><div style='position:absolute;left:950.68px;top:103.68px;line-height:12px;white-space:pre;font-family:"Liberation Sans", sans-serif;font-size:9.3px;font-weight:400;color:#ffffff;letter-spacing:-0.442px;'>Share</div><div style="position:absolute;left:984.80px;top:97.60px;width:22.00px;height:22.00px;background:#e7e1d6;border:1px solid #dcd6ca;border-radius:50%;"></div><div style='position:absolute;left:993.77px;top:102.85px;line-height:11px;white-space:pre;font-family:"Liberation Sans", sans-serif;font-size:8.5px;font-weight:400;color:#4a4845;letter-spacing:0.000px;'>J</div><div style="position:absolute;left:316.00px;top:126.20px;width:697.00px;height:29.40px;background:#ffffff;"></div><div style="position:absolute;left:315.10px;top:126.20px;width:0.90px;height:593.80px;background:#d3d2ce;"></div><div style="position:absolute;left:324.30px;top:130.80px;width:19.40px;height:18.80px;background:#fff;border:1px solid #efeeea;border-radius:4px;box-shadow:0 1px 1.500px rgba(0,0,0,.04);"></div><svg width="9" height="9" viewBox="0 0 24 24" style="left:329.5px;top:135.6px;transform:scaleX(-1)" fill="none" stroke="#77756f" stroke-width="2.200" stroke-linecap="round"><path d="M20.500 12a8.500 8.500 0 1 1-3.200-6.600"/><path d="M17.800 1.800v4h-4" stroke-linejoin="round"/></svg><div style="position:absolute;left:731.30px;top:132.00px;width:42.90px;height:17.30px;background:#fff;border:1px solid #ecebe7;border-radius:4px;box-shadow:0 1px 1.500px rgba(0,0,0,.04);"></div><div style='position:absolute;left:737.88px;top:134.88px;line-height:12px;white-space:pre;font-family:"Liberation Sans", sans-serif;font-size:9.3px;font-weight:400;color:#33322f;letter-spacing:-0.339px;'>Tweaks</div><div style="position:absolute;left:784.00px;top:135.00px;width:1.00px;height:12.00px;background:#e4e2dc;"></div><div style="position:absolute;left:793.80px;top:132.00px;width:63.60px;height:17.30px;background:#fff;border:1px solid #ecebe7;border-radius:4px;box-shadow:0 1px 1.500px rgba(0,0,0,.04);"></div><svg width="8.5" height="8.5" viewBox="0 0 24 24" style="left:801.5px;top:136.400px" fill="none" stroke="#4a4845" stroke-width="2.200"><circle cx="12" cy="12" r="9.500"/><path d="M7.500 12h9" stroke-linecap="round"/></svg><div style='position:absolute;left:813.00px;top:134.88px;line-height:12px;white-space:pre;font-family:"Liberation Sans", sans-serif;font-size:9.3px;font-weight:400;color:#33322f;letter-spacing:-0.330px;'>Comment</div><div style="position:absolute;left:862.20px;top:132.00px;width:39.80px;height:17.30px;background:#fff;border:1px solid #ecebe7;border-radius:4px;box-shadow:0 1px 1.500px rgba(0,0,0,.04);"></div><svg width="9" height="9" viewBox="0 0 24 24" style="left:869.500px;top:136.200px" fill="none" stroke="#4a4845" stroke-width="2" stroke-linecap="round"><path d="M5 17c3-8 8-13 11-12s-3 9-10 11c4 1 8 .5 12-1"/><path d="M4 21h14"/></svg><div style='position:absolute;left:881.00px;top:134.88px;line-height:12px;white-space:pre;font-family:"Liberation Sans", sans-serif;font-size:9.3px;font-weight:400;color:#33322f;letter-spacing:-0.258px;'>Edit</div><div style="position:absolute;left:907.20px;top:132.00px;width:45.70px;height:17.30px;background:#fff;border:1px solid #ecebe7;border-radius:4px;box-shadow:0 1px 1.500px rgba(0,0,0,.04);"></div><svg width="8" height="9" viewBox="0 0 24 24" style="left:915px;top:136.200px" fill="none" stroke="#4a4845" stroke-width="2.200" stroke-linecap="round"><path d="M15 3c2 0 3 2 2 4L11 19c-1 2-4 2-4 0L12 6c.5-2 2-3 3-3z"/></svg><div style='position:absolute;left:926.50px;top:134.88px;line-height:12px;white-space:pre;font-family:"Liberation Sans", sans-serif;font-size:9.3px;font-weight:400;color:#33322f;letter-spacing:-0.301px;'>Draw</div><div style="position:absolute;left:957.70px;top:132.00px;width:48.10px;height:17.30px;background:#fff;border:1px solid #ecebe7;border-radius:4px;box-shadow:0 1px 1.500px rgba(0,0,0,.04);"></div><svg width="8" height="8" viewBox="0 0 24 24" style="left:965px;top:136.800px" fill="none" stroke="#4a4845" stroke-width="2.400" stroke-linecap="round"><circle cx="10" cy="10" r="7"/><path d="M15.500 15.500L22 22"/></svg><div style='position:absolute;left:977.00px;top:134.88px;line-height:12px;white-space:pre;font-family:"Liberation Sans", sans-serif;font-size:9.3px;font-weight:400;color:#33322f;letter-spacing:-0.320px;'>100%</div><div style="position:absolute;left:315.80px;top:155.60px;width:697.20px;height:453.00px;background:#050505;"></div><div style="position:absolute;left:315.80px;top:185.90px;width:697.20px;height:392.40px;background:#0c0c0c;"></div><div style="position:absolute;left:351.80px;top:223.80px;width:4.00px;height:4.00px;background:#2bb3e0;border-radius:50%;"></div><div style='position:absolute;left:361.60px;top:219.52px;line-height:12px;white-space:pre;font-family:"DejaVu Sans Mono", monospace;font-size:8.9px;font-weight:400;color:#8e8e8e;letter-spacing:0.954px;-webkit-text-stroke:0.25px #8e8e8e;'>LINUXFEST 2026 · JOSHUA HALE · 30 MIN</div><div style='position:absolute;left:870.40px;top:220.16px;line-height:11px;white-space:pre;font-family:"DejaVu Sans Mono", monospace;font-size:8.5px;font-weight:400;color:#7e7e7e;letter-spacing:7.560px;'>JH//MEDIA</div><div style='position:absolute;left:352.60px;top:241.79px;line-height:12px;white-space:pre;font-family:"DejaVu Sans Mono", monospace;font-size:9.0px;font-weight:700;color:#35a6d6;letter-spacing:1.216px;'>KEYNOTE · 10 DANGERS</div><div style='position:absolute;left:352.60px;top:257.89px;line-height:60px;white-space:pre;font-family:"Liberation Sans", sans-serif;font-size:46.5px;font-weight:700;color:#fafafa;letter-spacing:-0.400px;-webkit-text-stroke:2.3px #fafafa;transform:scaleX(1.1221);transform-origin:0 50%;'>10</div><div style='position:absolute;left:422.80px;top:257.89px;line-height:60px;white-space:pre;font-family:"Liberation Sans", sans-serif;font-size:46.5px;font-weight:700;color:#fafafa;letter-spacing:-0.400px;-webkit-text-stroke:2.3px #fafafa;transform:scaleX(1.0001);transform-origin:0 50%;'>Dangers</div><div style='position:absolute;left:353.00px;top:302.09px;line-height:60px;white-space:pre;font-family:"Liberation Sans", sans-serif;font-size:46.5px;font-weight:700;color:#fafafa;letter-spacing:-0.400px;-webkit-text-stroke:2.3px #fafafa;transform:scaleX(1.0652);transform-origin:0 50%;'>you'll face</div><div style="position:absolute;left:352.9px;top:354.7px;width:318.7px;height:97.8px;background:#1cb4e8;transform:rotate(-0.93deg);transform-origin:50% 50%;"><div style='position:absolute;left:5.80px;top:-6.81px;line-height:60px;white-space:pre;font-family:"Liberation Sans", sans-serif;font-size:46.5px;font-weight:700;color:#0a0a0a;letter-spacing:-0.400px;-webkit-text-stroke:2.3px #0a0a0a;transform:scaleX(1.0287);transform-origin:0 50%;'>in your</div><div style='position:absolute;left:6.10px;top:41.29px;line-height:60px;white-space:pre;font-family:"Liberation Sans", sans-serif;font-size:46.5px;font-weight:700;color:#0a0a0a;letter-spacing:-0.400px;-webkit-text-stroke:2.3px #0a0a0a;transform:scaleX(1.0926);transform-origin:0 50%;'>lifetime.</div></div><div style='position:absolute;left:352.80px;top:474.29px;line-height:14px;white-space:pre;font-family:"Liberation Sans", sans-serif;font-size:11.0px;font-weight:400;color:#bebebe;letter-spacing:-0.045px;'>Not theory. Not speculation. Ten things already happening, most</div><div style='position:absolute;left:352.80px;top:488.79px;line-height:14px;white-space:pre;font-family:"Liberation Sans", sans-serif;font-size:11.0px;font-weight:400;color:#bebebe;letter-spacing:-0.035px;'>of them in the last twelve months. I'm giving you the receipts.</div><div style='position:absolute;left:352.40px;top:529.06px;line-height:7px;white-space:pre;font-family:"DejaVu Sans Mono", monospace;font-size:5.6px;font-weight:400;color:#7d7d7d;letter-spacing:1.117px;'>SPEAKER</div><div style='position:absolute;left:352.40px;top:539.78px;line-height:12px;white-space:pre;font-family:"DejaVu Sans Mono", monospace;font-size:9.3px;font-weight:400;color:#d6d6d6;letter-spacing:0.729px;'>Joshua Hale</div><div style='position:absolute;left:451.90px;top:529.06px;line-height:7px;white-space:pre;font-family:"DejaVu Sans Mono", monospace;font-size:5.6px;font-weight:400;color:#7d7d7d;letter-spacing:1.011px;'>VENUE</div><div style='position:absolute;left:451.90px;top:539.78px;line-height:12px;white-space:pre;font-family:"DejaVu Sans Mono", monospace;font-size:9.3px;font-weight:400;color:#d6d6d6;letter-spacing:0.752px;'>LinuxFest 2026</div><div style='position:absolute;left:570.40px;top:529.06px;line-height:7px;white-space:pre;font-family:"DejaVu Sans Mono", monospace;font-size:5.6px;font-weight:400;color:#7d7d7d;letter-spacing:1.117px;'>RUNTIME</div><div style='position:absolute;left:570.40px;top:539.78px;line-height:12px;white-space:pre;font-family:"DejaVu Sans Mono", monospace;font-size:9.3px;font-weight:400;color:#d6d6d6;letter-spacing:0.718px;'>30 min</div><div style="position:absolute;left:699.60px;top:259.00px;width:276.80px;height:276.60px;background:#0c1014;border:1px solid #0e1317;"></div><div style="position:absolute;left:705.00px;top:266.00px;width:47.00px;height:11.00px;background:#0a0d11;"></div><div style='position:absolute;left:710.70px;top:267.93px;line-height:7px;white-space:pre;font-family:"DejaVu Sans Mono", monospace;font-size:5.4px;font-weight:700;color:#86c9dc;letter-spacing:0.323px;'>HERO IMAGE</div><div style='position:absolute;left:799.30px;top:387.27px;line-height:9px;white-space:pre;font-family:"DejaVu Sans Mono", monospace;font-size:7.3px;font-weight:700;color:#d2d2d2;letter-spacing:-0.004px;'>Bold opening image</div><div style='position:absolute;left:792.94px;top:400.30px;line-height:7px;white-space:pre;font-family:"DejaVu Sans Mono", monospace;font-size:5.2px;font-weight:400;color:#6f7378;letter-spacing:0.388px;'>(replace in Google Slides)</div><svg width="58.6" height="58.6" viewBox="0 0 58.6 58.6" style="left:934.7px;top:483.2px"><defs><pattern id="qd" width="5.86" height="5.86" patternUnits="userSpaceOnUse"><circle cx="0" cy="0" r="1.15" fill="#0a0a0a"/><circle cx="5.86" cy="0" r="1.15" fill="#0a0a0a"/><circle cx="0" cy="5.86" r="1.15" fill="#0a0a0a"/><circle cx="5.86" cy="5.86" r="1.15" fill="#0a0a0a"/><circle cx="2.93" cy="2.93" r="1.15" fill="#0a0a0a"/></pattern></defs><rect width="58.6" height="58.6" rx="1.5" fill="#fff"/><rect width="58.6" height="58.6" fill="url(#qd)"/><rect x="3.2" y="3.4" width="18.8" height="18.8" fill="#0a0a0a"/><rect x="5.4" y="5.6" width="14.4" height="14.4" fill="#fff"/><rect x="7.9" y="8.1" width="9.4" height="9.4" fill="#0a0a0a"/><rect x="37.0" y="3.4" width="18.8" height="18.8" fill="#0a0a0a"/><rect x="39.2" y="5.6" width="14.4" height="14.4" fill="#fff"/><rect x="41.7" y="8.1" width="9.4" height="9.4" fill="#0a0a0a"/><rect x="3.2" y="36.8" width="18.8" height="18.8" fill="#0a0a0a"/><rect x="5.4" y="39.0" width="14.4" height="14.4" fill="#fff"/><rect x="7.9" y="41.5" width="9.4" height="9.4" fill="#0a0a0a"/></svg><div style='position:absolute;left:979.52px;top:546.21px;line-height:6px;white-space:pre;font-family:"DejaVu Sans Mono", monospace;font-size:4.6px;font-weight:700;color:#3fb0da;letter-spacing:0.900px;'>SCAN</div><div style='position:absolute;left:937.22px;top:553.48px;line-height:6px;white-space:pre;font-family:"DejaVu Sans Mono", monospace;font-size:4.4px;font-weight:400;color:#6c6c6c;letter-spacing:0.919px;'>FULL SOURCE PACK</div><div style="position:absolute;left:315.80px;top:608.50px;width:697.20px;height:111.50px;background:#ffffff;"></div><div style='position:absolute;left:324.60px;top:615.01px;line-height:12px;white-space:pre;font-family:"Liberation Sans", sans-serif;font-size:9.2px;font-weight:700;color:#6a6a6a;letter-spacing:-0.125px;'>SPEAKER NOTES</div><div style='position:absolute;left:409.70px;top:615.01px;line-height:12px;white-space:pre;font-family:"Liberation Sans", sans-serif;font-size:9.2px;font-weight:400;color:#7a7a7a;letter-spacing:-0.265px;'>Slide 1 / 12</div><div style='position:absolute;left:326.00px;top:641.83px;line-height:14px;white-space:pre;font-family:"Liberation Sans", sans-serif;font-size:10.6px;font-weight:400;color:#262626;letter-spacing:-0.142px;'>The hammer isn't the danger. It's what corrupt men do with it. That's how I opened the book I started writing on this topic back in 2024. I wanted to</div><div style='position:absolute;left:326.00px;top:658.23px;line-height:14px;white-space:pre;font-family:"Liberation Sans", sans-serif;font-size:10.6px;font-weight:400;color:#262626;letter-spacing:-0.139px;'>write the book, but the content kept growing faster than I could write it. So this talk is the book, compressed into 30 minutes. Every single danger I</div><div style='position:absolute;left:326.00px;top:674.63px;line-height:14px;white-space:pre;font-family:"Liberation Sans", sans-serif;font-size:10.6px;font-weight:400;color:#262626;letter-spacing:-0.147px;'>warned about has gotten worse. Some in ways I didn't predict. Today I'm walking you through 10 of them, and I'm giving you the receipts. Not</div><div style='position:absolute;left:326.00px;top:691.03px;line-height:14px;white-space:pre;font-family:"Liberation Sans", sans-serif;font-size:10.6px;font-weight:400;color:#262626;letter-spacing:-0.143px;'>theory, not speculation, things that have already happened, most of them in the last 12 months. Quick credibility beat: I used to run a marketing</div><div style='position:absolute;left:326.00px;top:707.43px;line-height:14px;white-space:pre;font-family:"Liberation Sans", sans-serif;font-size:10.6px;font-weight:400;color:#262626;letter-spacing:-0.156px;'>agency. Jumped ship to research consumer AI full time in 2023. I teach people how to use AI so it doesn't use them. Let's go.</div><svg width="12" height="90" viewBox="0 0 12 90" style="left:1001.6px;top:632px"><path d="M2.200 9.700 L6 4.700 L9.800 9.700Z" fill="#8f8f8f"/><rect x="2.700" y="15.500" width="6.700" height="50" rx="3.300" fill="#8f8f8f"/><path d="M2.200 78.800 L6 83.800 L9.800 78.800Z" fill="#8f8f8f"/></svg><div style="position:absolute;left:0.00px;top:717.60px;width:1013.00px;height:2.40px;background:#0a0a0a;"></div><div style="position:absolute;left:12.00px;top:247.30px;width:45.30px;height:285.20px;background:#29292d;border-radius:16px;box-shadow:0 1px 4px rgba(0,0,0,.25);"></div><div style="position:absolute;left:20.80px;top:253.30px;width:28.00px;height:28.00px;background:#1b1b1e;border-radius:12px;"></div><div style="position:absolute;left:27.90px;top:260.40px;width:13.80px;height:13.80px;background:#5b5b61;border-radius:2.500px;"></div><div style='position:absolute;left:24.42px;top:289.48px;line-height:12px;white-space:pre;font-family:"Liberation Sans", sans-serif;font-size:9.3px;font-weight:700;color:#cfcfd2;letter-spacing:0.648px;'>0:00</div><div style="position:absolute;left:28.70px;top:316.30px;width:5.40px;height:13.50px;background:#505056;border-radius:1.500px;"></div><div style="position:absolute;left:35.50px;top:316.30px;width:5.40px;height:13.50px;background:#505056;border-radius:1.500px;"></div><div style="position:absolute;left:22.00px;top:341.50px;width:24.50px;height:1.00px;background:#34343a;"></div><svg width="21" height="21" viewBox="0 0 24 24" style="left:24px;top:346.800px" fill="none" stroke="#505056" stroke-width="1.700" stroke-linecap="round" stroke-linejoin="round"><path d="M4.500 12a7.800 7.800 0 1 0 2.600-5.800"/><path d="M6.200 2.500v4.200h4.200"/></svg><svg width="15.4" height="18" viewBox="0 0 22 24" style="left:26.900px;top:383.300px" fill="none" stroke="#505056" stroke-width="1.900" stroke-linecap="round" stroke-linejoin="round"><path d="M2 5.500h18M7.500 5.500V2.500h7v3M4 5.500l.8 16h12.400l.8-16M8.500 10v7.500M13.500 10v7.500"/></svg><div style="position:absolute;left:22.00px;top:412.50px;width:24.50px;height:1.00px;background:#34343a;"></div><svg width="18" height="10.5" viewBox="0 0 24 16" style="left:25.500px;top:429.600px" fill="#4c4c52"><path d="M12 1L2 8l10 7zM23 1L13 8l10 7z"/></svg><svg width="15.6" height="15.6" viewBox="0 0 18 18" style="left:26.700px;top:461.800px" fill="#47474d"><circle cx="2.0" cy="5.5" r="0.95"/><circle cx="2.0" cy="9.0" r="0.95"/><circle cx="2.0" cy="12.5" r="0.95"/><circle cx="5.5" cy="2.0" r="0.95"/><circle cx="5.5" cy="5.5" r="1.25"/><circle cx="5.5" cy="9.0" r="1.25"/><circle cx="5.5" cy="12.5" r="1.25"/><circle cx="5.5" cy="16.0" r="0.95"/><circle cx="9.0" cy="2.0" r="0.95"/><circle cx="9.0" cy="5.5" r="1.25"/><circle cx="9.0" cy="9.0" r="1.25"/><circle cx="9.0" cy="12.5" r="1.25"/><circle cx="9.0" cy="16.0" r="0.95"/><circle cx="12.5" cy="2.0" r="0.95"/><circle cx="12.5" cy="5.5" r="1.25"/><circle cx="12.5" cy="9.0" r="1.25"/><circle cx="12.5" cy="12.5" r="1.25"/><circle cx="12.5" cy="16.0" r="0.95"/><circle cx="16.0" cy="5.5" r="0.95"/><circle cx="16.0" cy="9.0" r="0.95"/><circle cx="16.0" cy="12.5" r="0.95"/></svg><div style="position:absolute;left:22.00px;top:486.50px;width:24.50px;height:1.00px;background:#34343a;"></div><svg width="17.2" height="12.6" viewBox="0 0 26 19" style="left:26px;top:505.900px" fill="none" stroke="#f2f2f2" stroke-width="2.300" stroke-linejoin="round"><rect x="1.500" y="2" width="15.500" height="15" rx="2.500"/><path d="M17 8l7-4v11l-7-4z"/></svg>
</div>
</body></html>
